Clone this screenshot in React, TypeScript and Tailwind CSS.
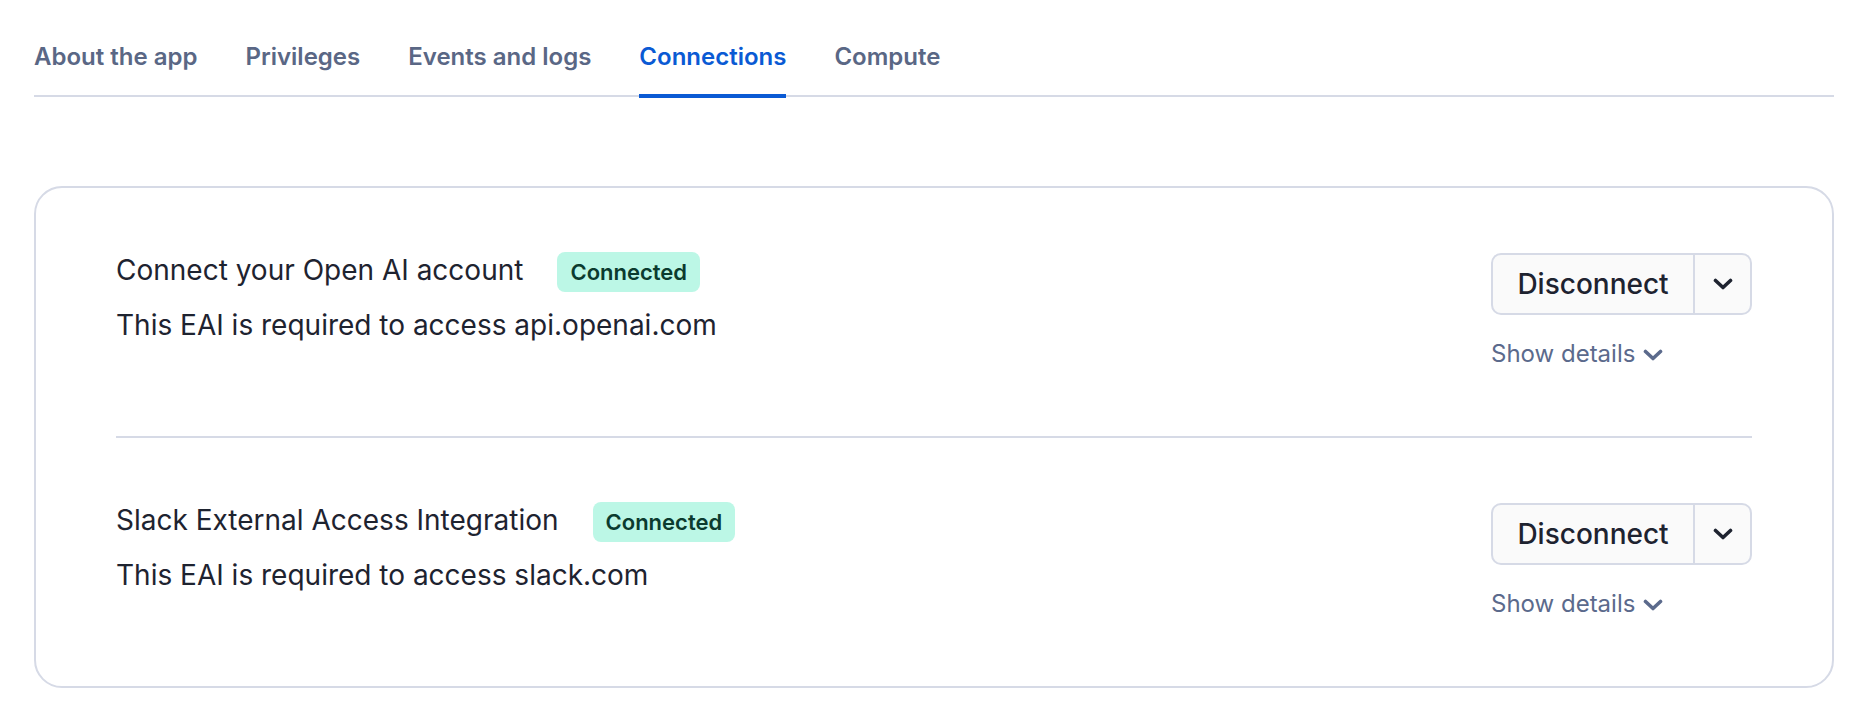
import React from "react";

const tabs = ["About the app", "Privileges", "Events and logs", "Connections", "Compute"];

function Chevron({ className }: { className?: string }) {
  return (
    <svg viewBox="0 0 20 12" className={className} fill="none">
      <polyline points="2.5,2.5 10,9.5 17.5,2.5" stroke="currentColor" strokeWidth="3.6" strokeLinecap="round" strokeLinejoin="round" />
    </svg>
  );
}

function Row({ title, desc, first }: { title: string; desc: string; first?: boolean }) {
  return (
    <div className={"flex justify-between items-start pt-[64px] pb-[66px]" + (first ? " border-b-2 border-[#d6dae6]" : "")}>
      <div className="flex flex-col">
        <div className="flex items-center gap-[34px] h-[40px]">
          <span className="relative -top-[2px] text-[28px] leading-[36px] text-[#1e2330] font-normal">{title}</span>
          <span className="h-[40px] px-[13px] flex items-center rounded-[8px] bg-[#bcf7e6] text-[#0b3b2f] text-[22px] font-semibold">
            Connected
          </span>
        </div>
        <div className="mt-[15px] text-[28px] leading-[36px] text-[#1e2330]">{desc}</div>
      </div>
      <div className="flex flex-col items-start mt-[1px]">
        <div className="flex h-[62px] w-[261px] border-2 border-[#d6dae6] rounded-[10px] bg-[#fafafa]">
          <div className="w-[200px] flex items-center justify-center text-[28px] font-medium text-[#1e2330]">
            Disconnect
          </div>
          <div className="w-[2px] bg-[#d6dae6]" />
          <div className="flex-1 flex items-center justify-center text-[#1e2330]">
            <Chevron className="w-[20px] h-[12px]" />
          </div>
        </div>
        <div className="mt-[23px] flex items-center gap-[8px] text-[24px] leading-[32px] text-[#5b6a8c]">
          <span>Show details</span>
          <Chevron className="w-[20px] h-[12px] mt-[2px]" />
        </div>
      </div>
    </div>
  );
}

export default function App() {
  return (
    <div className="min-h-[718px] bg-white" style={{ fontFamily: "Inter, 'Noto Sans', sans-serif" }}>
      <div className="ml-[34px] w-[1800px]">
        <div className="flex gap-[48px] items-start h-[97px] border-b-2 border-[#d6dae6]">
          {tabs.map((t) => {
            const active = t === "Connections";
            return (
              <div
                key={t}
                className={
                  "h-[98px] pt-[42px] border-b-4 text-[24px] leading-[30px] font-semibold " +
                  (active ? "border-[#0a5ad4] text-[#0a5ad4]" : "border-transparent text-[#5a6785]")
                }
              >
                {t}
              </div>
            );
          })}
        </div>
        <div className="mt-[89px] border-2 border-[#d6dae6] rounded-[28px] px-[80px]">
          <Row first title="Connect your Open AI account" desc="This EAI is required to access api.openai.com" />
          <Row title="Slack External Access Integration" desc="This EAI is required to access slack.com" />
        </div>
      </div>
    </div>
  );
}
